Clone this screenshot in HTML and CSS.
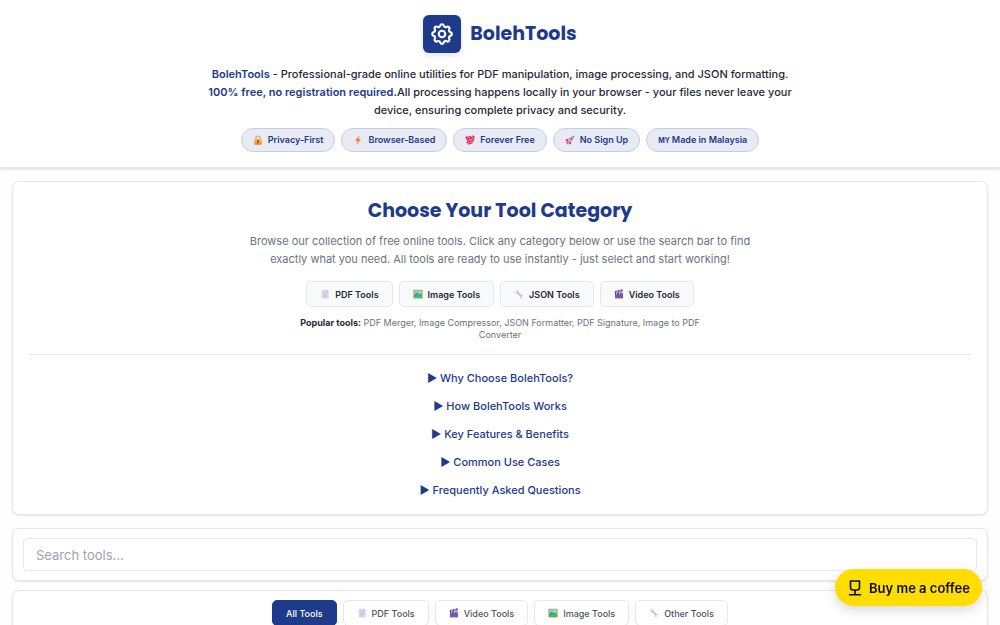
FILE: index.html
```html
<!DOCTYPE html>
<html lang="en">
<head>
    <meta charset="UTF-8">
    <meta name="viewport" content="width=device-width, initial-scale=1.0">
    <title>BolehTools</title>
    <link rel="stylesheet" href="styles.css">
</head>
<body>
    <!-- Shared icons -->
    <svg class="sprite" aria-hidden="true">
        <symbol id="lock" viewBox="0 0 16 16">
            <path d="M4.5 8V5a3.5 3.5 0 0 1 7 0v3" fill="none" stroke="#b9a79d" stroke-width="1.8"/>
            <rect x="2" y="6.500" width="12" height="9" rx="1.500" fill="#fbb03b"/>
            <path d="M2 12h12v2a1.500 1.500 0 0 1-1.500 1.500h-9A1.500 1.500 0 0 1 2 14z" fill="#f2912b"/>
            <circle cx="8" cy="10" r="1.500" fill="#5b4638"/>
            <path d="M7.300 10h1.400v3.500H7.300z" fill="#5b4638"/>
        </symbol>
        <symbol id="bolt" viewBox="0 0 16 16">
            <path d="M10 .5 3.500 8.800l3.800 1L5.500 15.500 12.500 7 8.800 6z" fill="#ff7a45"/>
            <path d="M7.300 9.800 5.500 15.500 12.500 7z" fill="#ff9347"/>
        </symbol>
        <symbol id="hundred" viewBox="0 0 16 16">
            <g fill="none" stroke="#e8174b" stroke-width="1.900" stroke-linecap="round">
                <path d="m1.500 4.500 1.500-1.500.8 6"/>
                <ellipse cx="7.200" cy="5.500" rx="1.700" ry="2.900" transform="rotate(12 7.200 5.500)"/>
                <ellipse cx="12.500" cy="4.500" rx="1.700" ry="2.900" transform="rotate(12 12.500 4.500)"/>
                <path d="M3 12.200q4-2.500 10.500-2.700M5.500 14.500q2.500-1.500 6-2"/>
            </g>
        </symbol>
        <symbol id="rocket" viewBox="0 0 16 16">
            <path d="M5.500 5.500 1.500 7l-.5 3 4-.5zM10.500 10.500 9 14.500l-3 .5.500-4z" fill="#f02d58"/>
            <path d="M4 9C6 4.500 10 1 15 1c0 5-3.500 9-8 11z" fill="#b9b2cf"/>
            <path d="M11.500 1.600Q13.200 1 15 1q0 1.800-.6 3.500z" fill="#f25a78"/>
            <circle cx="10.300" cy="5.700" r="1.500" fill="#42658f"/>
            <path d="m4 9 3 3-2 1-1.500 2.500L3 13l-2.500-.5L3 11z" fill="#ff5364"/>
        </symbol>
        <symbol id="page" viewBox="0 0 16 16">
            <path d="M2.500 1h8l3.500 3.500V15H2.500z" fill="#e0d7ec"/>
            <path d="M10.500 1v3.500H14z" fill="#b9a7d0"/>
            <path d="M5 5h3.500M5 7.500h6.500M5 10h6.500M5 12.500h5" stroke="#c3b3d8" stroke-width="1"/>
        </symbol>
        <symbol id="picture" viewBox="0 0 16 16">
            <rect x=".5" y="1" width="15" height="14" rx=".8" fill="#d69b4a"/>
            <path d="M2 2.500h12v11H2z" fill="#70cff3"/>
            <path d="M2 10 6 6l3 3 2-2 3 3v3.500H2z" fill="#24a65b"/>
            <path d="M2 11q6-3 12 0v2.500H2z" fill="#39be72"/>
            <circle cx="11.500" cy="5" r="1.300" fill="#ffe05a"/>
        </symbol>
        <symbol id="wrench" viewBox="0 0 16 16">
            <path d="M1.300 3.200 3.200 5l1.600-.3.300-1.600-1.700-1.900Q7 .5 7.200 4.600l4.400 4.600q3.600-.3 3.300 3.200l-1.700-1.600-1.500.4-.3 1.600 1.600 1.800q-3.800.6-3.700-3.400L4.900 6.700Q1 6.900 1.300 3.200z" fill="#c5bdd6"/>
        </symbol>
        <symbol id="clapper" viewBox="0 0 16 16">
            <path d="m1 3.500 12.500-3 .7 3L1.700 6.500z" fill="#54418a"/>
            <path d="m4.200 2.700 1.700-.4-.5 3.300-1.700.4zM9 1.600l1.700-.4-.5 3.300-1.700.4z" fill="#e4dbf5"/>
            <path d="M1.500 6h13v9h-13z" fill="#7559b5"/>
            <path d="M1.500 6h13v2.800h-13z" fill="#463576"/>
            <path d="m4 6 1.800 0-1.500 2.800H2.500zM8.800 6h1.800L9.100 8.800H7.300zM13 6h1.500L13 8.800h-1.500z" fill="#e4dbf5"/>
        </symbol>
    </svg>

    <header class="header">
        <div class="logo">
            <span class="logo-icon">
                <svg viewBox="0 0 24 24" width="26" height="26" fill="none" stroke="#fff" stroke-width="2" stroke-linejoin="round">
                    <path d="M10.300 4.300c.4-1.700 3-1.700 3.400 0a1.700 1.700 0 0 0 2.600 1.100c1.500-1 3.300.8 2.400 2.400a1.700 1.700 0 0 0 1 2.500c1.800.4 1.800 3 0 3.400a1.700 1.700 0 0 0-1 2.600c.9 1.500-.9 3.300-2.400 2.400a1.700 1.700 0 0 0-2.600 1c-.4 1.800-3 1.800-3.400 0a1.700 1.700 0 0 0-2.500-1c-1.600.9-3.400-.9-2.400-2.400a1.700 1.700 0 0 0-1.100-2.600c-1.700-.4-1.700-3 0-3.400a1.700 1.700 0 0 0 1.100-2.500c-1-1.600.8-3.400 2.400-2.400 1 .6 2.300 0 2.500-1.100z"/>
                    <circle cx="12" cy="12" r="3"/>
                </svg>
            </span>
            <h1 class="logo-text">BolehTools</h1>
        </div>
        <p class="intro"><strong>BolehTools</strong> - Professional-grade online utilities for PDF manipulation, image processing, and JSON formatting. <strong>100% free, no registration required.</strong>All processing happens locally in your browser - your files never leave your device, ensuring complete privacy and security.</p>
        <div class="badges">
            <span class="badge"><svg class="icon"><use href="#lock"/></svg>Privacy-First</span>
            <span class="badge"><svg class="icon"><use href="#bolt"/></svg>Browser-Based</span>
            <span class="badge"><svg class="icon"><use href="#hundred"/></svg>Forever Free</span>
            <span class="badge"><svg class="icon"><use href="#rocket"/></svg>No Sign Up</span>
            <span class="badge badge-country"><span class="flag">MY</span>Made in Malaysia</span>
        </div>
    </header>

    <main class="container">
        <section class="card categories">
            <h2 class="title">Choose Your Tool Category</h2>
            <p class="lead">Browse our collection of free online tools. Click any category below or use the search bar to find exactly what you need. All tools are ready to use instantly - just select and start working!</p>
            <div class="category-list">
                <button class="category" type="button"><svg class="icon"><use href="#page"/></svg>PDF Tools</button>
                <button class="category" type="button"><svg class="icon"><use href="#picture"/></svg>Image Tools</button>
                <button class="category" type="button"><svg class="icon"><use href="#wrench"/></svg>JSON Tools</button>
                <button class="category" type="button"><svg class="icon"><use href="#clapper"/></svg>Video Tools</button>
            </div>
            <p class="popular"><strong>Popular tools:</strong> PDF Merger, Image Compressor, JSON Formatter, PDF Signature, Image to PDF Converter</p>
            <div class="faq">
                <details>
                    <summary>Why Choose BolehTools?</summary>
                </details>
                <details>
                    <summary>How BolehTools Works</summary>
                </details>
                <details>
                    <summary>Key Features &amp; Benefits</summary>
                </details>
                <details>
                    <summary>Common Use Cases</summary>
                </details>
                <details>
                    <summary>Frequently Asked Questions</summary>
                </details>
            </div>
        </section>

        <section class="card search">
            <input class="search-input" type="search" placeholder="Search tools..." aria-label="Search tools">
        </section>

        <section class="card filters">
            <button class="filter active" type="button">All Tools</button>
            <button class="filter" type="button"><svg class="icon"><use href="#page"/></svg>PDF Tools</button>
            <button class="filter" type="button"><svg class="icon"><use href="#clapper"/></svg>Video Tools</button>
            <button class="filter" type="button"><svg class="icon"><use href="#picture"/></svg>Image Tools</button>
            <button class="filter" type="button"><svg class="icon"><use href="#wrench"/></svg>Other Tools</button>
        </section>
    </main>

    <a class="coffee" href="#">
        <svg viewBox="0 0 16 18" width="16" height="18" fill="none" stroke="#0d0c22" stroke-width="1.600" stroke-linecap="round" stroke-linejoin="round">
            <path d="M3.500 2h9v6.500a2.500 2.500 0 0 1-2.500 2.500H6a2.500 2.500 0 0 1-2.500-2.500zM8 11v4.500M2.500 15.800h11"/>
        </svg>
        Buy me a coffee
    </a>
</body>
</html>
```

FILE: styles.css
```css
* {
    box-sizing: border-box;
}

body {
    margin: 0;
    font-family: 'Inter', sans-serif;
    font-size: 11px;
    line-height: 18px;
    color: #1f2937;
    background-color: #fefefe;
    overflow-x: hidden;
}

h1,
h2,
p {
    margin: 0;
}

button,
input {
    font-family: inherit;
}

.sprite {
    display: none;
}

.icon {
    width: 10px;
    height: 10px;
    flex: none;
}

.header {
    display: flex;
    flex-direction: column;
    align-items: center;
    padding: 15px 16px;
    background-color: #fff;
    border-bottom: 1px solid #e5e7eb;
    box-shadow: 0 1px 3px rgba(0, 0, 0, 0.15);
}

.logo {
    display: flex;
    align-items: center;
    gap: 9px;
    margin-bottom: 12px;
}

.logo-icon {
    display: flex;
    align-items: center;
    justify-content: center;
    width: 38px;
    height: 38px;
    border-radius: 6px;
    background-color: #1e3a8a;
    box-shadow: 0 2px 6px rgba(30, 58, 138, 0.15);
}

.logo-text {
    font-family: 'Poppins', 'Inter', sans-serif;
    font-size: 19px;
    line-height: 28px;
    font-weight: 700;
    color: #1e3a8a;
}

.intro {
    max-width: 600px;
    font-weight: 500;
    text-align: center;
    margin-bottom: 9px;
}

.intro strong {
    color: #1e3a8a;
    font-weight: 600;
}

.badges {
    display: flex;
    flex-wrap: wrap;
    justify-content: center;
    gap: 6px;
}

.badge {
    display: flex;
    align-items: center;
    gap: 5px;
    height: 24px;
    padding: 0 11px;
    border: 1px solid #c7cde0;
    border-radius: 12px;
    background-color: #e8ebf3;
    font-size: 9px;
    font-weight: 600;
    color: #1e3a8a;
}

.badge-country {
    align-items: baseline;
    gap: 2px;
    line-height: 22px;
}

.flag {
    font-size: 7px;
    font-weight: 700;
}

.container {
    display: flex;
    flex-direction: column;
    padding: 13px 12px 16px;
}

.card {
    border: 1px solid #e5e7eb;
    border-radius: 7px;
    background-color: #fff;
    box-shadow: 0 1px 2px rgba(0, 0, 0, 0.1);
}

.categories {
    padding: 15px 16px;
    text-align: center;
    margin-bottom: 13px;
}

.title {
    font-family: 'Poppins', 'Inter', sans-serif;
    font-size: 19px;
    line-height: 28px;
    font-weight: 700;
    color: #1e3a8a;
    margin-bottom: 7px;
}

.lead {
    max-width: 512px;
    margin: 0 auto 13px;
    color: #6b7280;
}

.category-list {
    display: flex;
    flex-wrap: wrap;
    justify-content: center;
    gap: 6px;
    margin-bottom: 10px;
}

.category,
.filter {
    display: flex;
    align-items: center;
    gap: 5px;
    height: 26px;
    padding: 0 13px;
    border: 1px solid #e5e7eb;
    border-radius: 5px;
    background-color: #f8fafc;
    font-size: 9px;
    font-weight: 600;
    color: #1f2937;
    cursor: pointer;
}

.category:hover,
.filter:hover {
    border-color: #1e3a8a;
}

.popular {
    max-width: 420px;
    margin: 0 auto;
    font-size: 9px;
    line-height: 12px;
    color: #6b7280;
}

.popular strong {
    color: #1f2937;
}

.faq {
    display: grid;
    gap: 10px;
    margin-top: 13px;
    padding-top: 14px;
    border-top: 1px solid #e5e7eb;
}

.faq summary {
    list-style: none;
    font-weight: 500;
    color: #1e3a8a;
    cursor: pointer;
}

.faq summary::before {
    content: '▶ ';
}

.search {
    padding: 9px 10px;
    margin-bottom: 9px;
}

.search-input {
    display: block;
    width: 100%;
    height: 33px;
    padding: 0 12px;
    border: 1px solid #e5e7eb;
    border-radius: 4px;
    background-color: #fff;
    font-size: 13px;
    color: #1f2937;
    outline: none;
}

.search-input::placeholder {
    color: #9ca3af;
}

.search-input:focus {
    border-color: #1e3a8a;
}

.filters {
    display: flex;
    flex-wrap: wrap;
    justify-content: center;
    gap: 6px;
    padding: 9px;
}

.filter {
    background-color: #fff;
    font-weight: 500;
    color: #4b5563;
}

.filter.active {
    border-color: #1e3a8a;
    background-color: #1e3a8a;
    color: #fff;
}

.coffee {
    position: fixed;
    right: 18px;
    bottom: 19px;
    display: flex;
    align-items: center;
    gap: 6px;
    height: 37px;
    padding: 0 12px;
    border-radius: 19px;
    background-color: #fd0;
    box-shadow: 0 4px 12px rgba(0, 0, 0, 0.15);
    font-size: 13px;
    font-weight: 600;
    color: #0d0c22;
    text-decoration: none;
}
```
